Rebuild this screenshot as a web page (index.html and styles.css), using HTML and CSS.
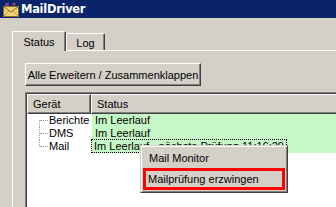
FILE: index.html
```html
<!DOCTYPE html>
<html>
<head>
<meta charset="utf-8">
<link rel="stylesheet" href="styles.css">
</head>
<body>
<div class="window">
  <div class="titlebar">
    <svg class="appicon" width="16" height="15" viewBox="0 0 16 15">
      <path d="M2 1 L6 1 L6 4 L2 4 Z" fill="#6a4a8a"/>
      <circle cx="11" cy="2" r="1.6" fill="#a04070"/>
      <rect x="0.5" y="4.5" width="15" height="10" fill="#f0d070" stroke="#8a6a20"/>
      <path d="M0.5 4.5 L8 10 L15.5 4.5" fill="none" stroke="#8a6a20"/>
      <path d="M0.5 14.5 L6 9 M15.5 14.5 L10 9" fill="none" stroke="#c0a040"/>
    </svg>
    <span class="title">MailDriver</span>
  </div>
  <div class="content">
    <div class="tabs">
      <div class="tab active">Status</div>
      <div class="tab">Log</div>
    </div>
    <div class="panel">
      <div class="button">Alle Erweitern / Zusammenklappen</div>
      <div class="listview">
        <div class="header">
          <div class="hcell col1">Gerät</div>
          <div class="hcell col2">Status</div>
        </div>
        <div class="rows">
          <div class="row">
            <div class="cell col1"><span class="tree first"></span>Berichte</div>
            <div class="cell col2 ok">Im Leerlauf</div>
          </div>
          <div class="row">
            <div class="cell col1"><span class="tree"></span>DMS</div>
            <div class="cell col2 ok">Im Leerlauf</div>
          </div>
          <div class="row">
            <div class="cell col1"><span class="tree last"></span>Mail</div>
            <div class="cell col2 ok"><span class="focus">Im Leerlauf - nächste Prüfung 11:16:29</span></div>
          </div>
        </div>
      </div>
    </div>
  </div>
  <div class="menu">
    <div class="menuitem">Mail Monitor</div>
    <div class="menuitem marked">Mailprüfung erzwingen</div>
  </div>
</div>
</body>
</html>
```
FILE: styles.css
```css
html, body {
  margin: 0;
  padding: 0;
}
body {
  width: 336px;
  height: 207px;
  overflow: hidden;
  background: #d4d0c8;
  font-family: "Liberation Sans", Arial, sans-serif;
  font-size: 11px;
  color: #000;
}
.window {
  position: relative;
  width: 336px;
  height: 207px;
  overflow: hidden;
}
.titlebar {
  height: 18px;
  background: #0a246a;
  display: flex;
  align-items: center;
  padding-left: 3px;
  gap: 2px;
}
.appicon {
  display: block;
}
.title {
  color: #fff;
  font-weight: bold;
  font-size: 11.5px;
  font-family: "DejaVu Sans", sans-serif;
  letter-spacing: -0.3px;
}
.content {
  padding: 13px 0 0 12px;
}
.tabs {
  display: flex;
  align-items: flex-end;
  height: 19px;
  position: relative;
  z-index: 1;
}
.tab {
  box-sizing: border-box;
  height: 17px;
  width: 39px;
  border-top: 1px solid #fff;
  border-left: 1px solid #fff;
  border-right: 1px solid #404040;
  box-shadow: inset -1px 0 0 #808080;
  border-radius: 2px 2px 0 0;
  display: flex;
  align-items: center;
  justify-content: center;
  padding-top: 2px;
}
.tab.active {
  height: 20px;
  width: 54px;
  margin-bottom: -1px;
  background: #d4d0c8;
  padding-top: 0;
}
.panel {
  border-top: 1px solid #fff;
  border-left: 1px solid #fff;
  padding: 12px 0 0 12px;
  height: 200px;
}
.button {
  box-sizing: border-box;
  width: 176px;
  height: 23px;
  border-top: 1px solid #fff;
  border-left: 1px solid #fff;
  border-right: 1px solid #404040;
  border-bottom: 1px solid #404040;
  box-shadow: inset -1px -1px 0 #808080;
  display: flex;
  align-items: center;
  justify-content: center;
}
.listview {
  margin-top: 6px;
  background: #fff;
  border-top: 1px solid #808080;
  border-left: 1px solid #808080;
  box-shadow: inset 1px 1px 0 #404040;
  padding: 1px 0 0 1px;
  height: 200px;
}
.header {
  display: flex;
  height: 20px;
}
.hcell {
  box-sizing: border-box;
  background: #d4d0c8;
  border-top: 1px solid #fff;
  border-left: 1px solid #fff;
  border-right: 1px solid #404040;
  border-bottom: 1px solid #404040;
  box-shadow: inset -1px -1px 0 #808080;
  display: flex;
  align-items: center;
  padding-left: 5px;
}
.col1 {
  width: 64px;
  flex: none;
}
.col2 {
  flex: 1;
}
.hcell.col2 {
  border-right: none;
  box-shadow: inset 0 -1px 0 #808080;
}
.row {
  display: flex;
  height: 13px;
  line-height: 13px;
}
.cell {
  position: relative;
  white-space: nowrap;
}
.cell.col1 {
  padding-left: 22px;
  box-sizing: border-box;
}
.cell.ok {
  background: #c6f7c6;
  margin-left: 1px;
  padding-left: 3px;
}
.tree {
  position: absolute;
  left: 12px;
  top: 0;
  width: 8px;
  height: 13px;
  border-left: 1px dotted #a0a0a0;
}
.tree::after {
  content: "";
  position: absolute;
  left: 0;
  top: 6px;
  width: 8px;
  border-top: 1px dotted #a0a0a0;
}
.tree.first {
  top: 6px;
  height: 7px;
}
.tree.first::after {
  top: 0;
}
.tree.last {
  height: 7px;
}
.focus {
  outline: 1px dotted #000;
  outline-offset: 0;
  display: inline-block;
  line-height: 12px;
  margin-left: -3px;
  padding: 0 2px 0 2px;
}
.menu {
  position: absolute;
  left: 140px;
  top: 145px;
  width: 148px;
  box-sizing: border-box;
  background: #d4d0c8;
  border-top: 1px solid #d4d0c8;
  border-left: 1px solid #d4d0c8;
  border-right: 1px solid #404040;
  border-bottom: 1px solid #404040;
  box-shadow: inset 1px 1px 0 #fff, inset -1px -1px 0 #808080;
  padding: 2px 2px;
}
.menuitem {
  height: 20px;
  line-height: 20px;
  padding-left: 6px;
  box-sizing: border-box;
}
.menuitem.marked {
  border: 3px solid #ff0000;
  line-height: 16px;
  padding-left: 2px;
  height: 22px;
}
```
